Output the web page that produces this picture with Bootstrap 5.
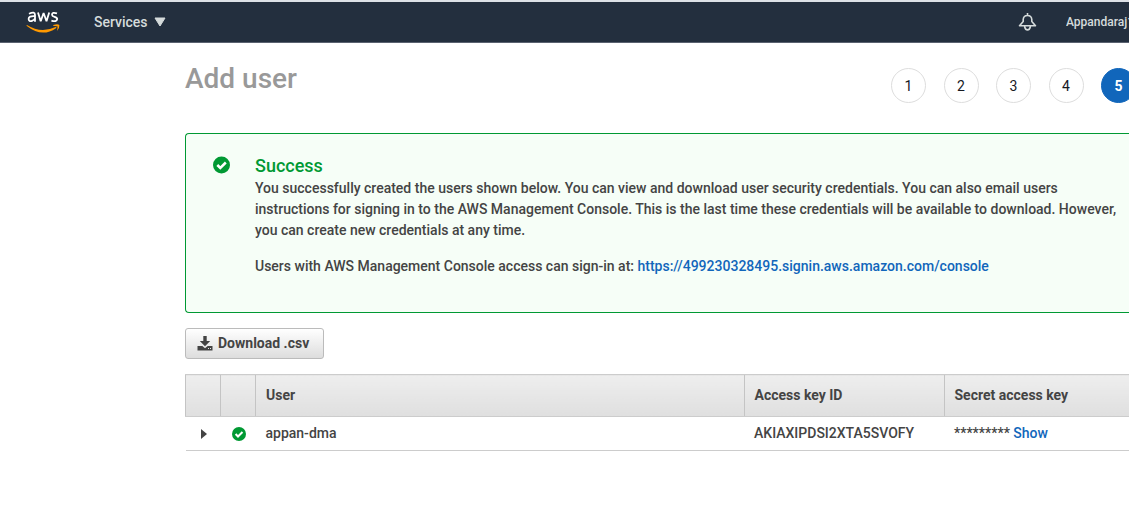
<!DOCTYPE html>
<html lang="en">
<head>
<meta charset="utf-8">
<meta name="viewport" content="width=device-width, initial-scale=1">
<title>Add user</title>
<link href="https://cdn.jsdelivr.net/npm/bootstrap@5.3.0/dist/css/bootstrap.min.css" rel="stylesheet">
<style>
body{font:400 14px/21px Roboto,"Liberation Sans",sans-serif;color:#444;background:#fff;overflow-x:hidden}
a{color:#1166bb;text-decoration:none}
.topbar{background:#232f3e;height:43px;padding:0 0 0 26px;border-top:2px solid #dde1e6;border-bottom:1px solid #5a6270}
.topbar button{background:none;border:0;padding:0;color:#d5dbdb;font-weight:500}
.services{margin-left:34px;gap:6px}
.account{font-size:12px;width:63px;margin-left:29px;white-space:nowrap;overflow:hidden;text-align:left}
.page-main{padding-left:185px}
.page-head{height:90px;padding-top:25px}
.page-head h1{font-size:28px;line-height:22px;font-weight:500;color:#999;margin:0}
.steps{width:245px;margin:0 -7px 0 0;padding:0}
.steps li{width:35px;height:35px;border:1px solid #ddd;border-radius:50%;color:#16191f;line-height:35px}
.steps li.current{background:#1166bb;border-color:#1166bb;color:#fff;font-weight:700}
.notice{background:#f6fef7;border:1px solid #093;border-right:0;border-radius:4px 0 0 4px;padding:21px 10px 35px 27px;gap:25px;font-weight:500}
.notice h2{font-size:18px;line-height:22px;font-weight:500;color:#093;margin:0 0 1px}
.notice .intro{margin-bottom:15px}
.download{margin:15px 0;height:31px;padding:0 14px 0 11px;gap:5px;border:1px solid #bbb;border-radius:3px;background:linear-gradient(#fff,#ddd);color:#444;font-weight:700;font-size:14px}
.users{table-layout:fixed;width:100%;font-weight:500}
.users th,.users td{padding:0 0 0 10px;vertical-align:middle;border-bottom:1px solid #ccc}
.users th{height:42px;font-weight:700;background:linear-gradient(#eee,#dfdfdf);border-top:1px solid #ccc;border-left:1px solid #c4c4c4}
.users td{height:34px}
.users td.mark-cell{padding:0 0 0 1px}
.w-icon{width:35px}.w-key{width:200px}.w-secret{width:185px}
.users button{background:none;border:0;padding:0}
</style>
</head>
<body>
<header class="topbar d-flex align-items-center">
  <a href="#" aria-label="AWS home" class="d-flex"><svg width="34" height="22" viewBox="0 0 34 22"><g fill="none" stroke="#fff" stroke-width="1.800"><path d="M3 2.800Q9 0 9 3.900V10.800M9 5.200Q2.600 4.700 2.600 8Q3 11 6 9.900Q8.400 9 9 7.300"/><path d="M12 1.500l2.700 8.800L17.600 2l2.900 8.300L23.200 1.500" stroke-linejoin="bevel"/><path d="M31 2.400Q26 .8 26 3.700C26 6.300 31.200 5.300 31.200 8Q30.600 11.400 25.400 9.600"/></g><path d="M1 14Q15 22.800 29.600 16Q31 15.800 30 17.200Q16 27 .8 15Q.2 13.900 1 14Z" fill="#f90"/><path d="M27.300 14Q31.500 12.600 33.400 13.900Q33.600 17.500 31 20Q31.500 17.500 31.600 15.500Q30.500 14.800 27.300 15.100Z" fill="#f90"/></svg></a>
  <button type="button" class="services d-flex align-items-center">Services <svg width="12" height="10" viewBox="0 0 12 10"><path d="M1 1h10L6 9z" fill="#d5dbdb" stroke="#d5dbdb"/></svg></button>
  <button type="button" class="ms-auto d-flex" aria-label="Notifications"><svg width="19" height="20" viewBox="0 0 19 20" fill="none" stroke="#d5dbdb" stroke-width="1.600" stroke-linejoin="round"><path d="M9.500 1v2.500M1.500 13.700L5.200 9.500V7.500Q5.500 3.500 9.500 3.500t4.300 4v2l3.700 4.200zM6.700 14v1Q7.400 17.900 9.500 17.900t2.800-2.900v-1"/></svg></button>
  <button type="button" class="account">Appandaraj1</button>
</header>
<main class="page-main">
  <div class="page-head d-flex justify-content-between">
    <h1>Add user</h1>
    <ol class="steps d-flex justify-content-between list-unstyled text-center">
      <li>1</li><li>2</li><li>3</li><li>4</li><li class="current" aria-current="step">5</li>
    </ol>
  </div>
  <section class="notice d-flex align-items-start">
    <svg class="flex-shrink-0" width="17" height="21" viewBox="0 0 17 21"><circle cx="8.500" cy="10" r="8.500" fill="#093"/><path d="M4.300 10l3 3 5.500-5.500" fill="none" stroke="#fff" stroke-width="2.500"/></svg>
    <div>
      <h2>Success</h2>
      <p class="intro">You successfully created the users shown below. You can view and download user security credentials. You can also email users instructions for signing in to the AWS Management Console. This is the last time these credentials will be available to download. However, you can create new credentials at any time.</p>
      <p class="mb-0">Users with AWS Management Console access can sign-in at: <a href="#">https://499230328495.signin.aws.amazon.com/console</a></p>
    </div>
  </section>
  <button type="button" class="download d-flex align-items-center"><svg width="16" height="16" viewBox="0 0 16 16" fill="#444"><path d="M6.300 0h3.400v5h3.500L8 10.300 2.800 5h3.500z"/><path fill-rule="evenodd" d="M.5 10h4.800L8 12.300l2.700-2.300H15.500v4.500H.5zM11 12v1h1v-1zM13 12v1h1v-1z"/></svg>Download .csv</button>
  <table class="users">
    <colgroup><col class="w-icon"><col class="w-icon"><col><col class="w-key"><col class="w-secret"></colgroup>
    <thead><tr><th></th><th></th><th>User</th><th>Access key ID</th><th>Secret access key</th></tr></thead>
    <tbody><tr>
      <td class="mark-cell"><button type="button" class="d-block mx-auto" aria-label="Expand"><svg class="d-block" width="6" height="10" viewBox="0 0 6 10"><path d="M0 0l6 5-6 5z" fill="#444"/></svg></button></td>
      <td class="mark-cell"><svg class="d-block mx-auto" width="14" height="14" viewBox="0 0 14 14"><circle cx="7" cy="7" r="7" fill="#093"/><path d="M3.600 7l2.400 2.500 4.500-4.500" fill="none" stroke="#fff" stroke-width="2"/></svg></td>
      <td>appan-dma</td><td>AKIAXIPDSI2XTA5SVOFY</td><td>********* <a href="#">Show</a></td>
    </tr></tbody>
  </table>
</main>
<script src="https://cdn.jsdelivr.net/npm/bootstrap@5.3.0/dist/js/bootstrap.bundle.min.js"></script>
</body>
</html>
